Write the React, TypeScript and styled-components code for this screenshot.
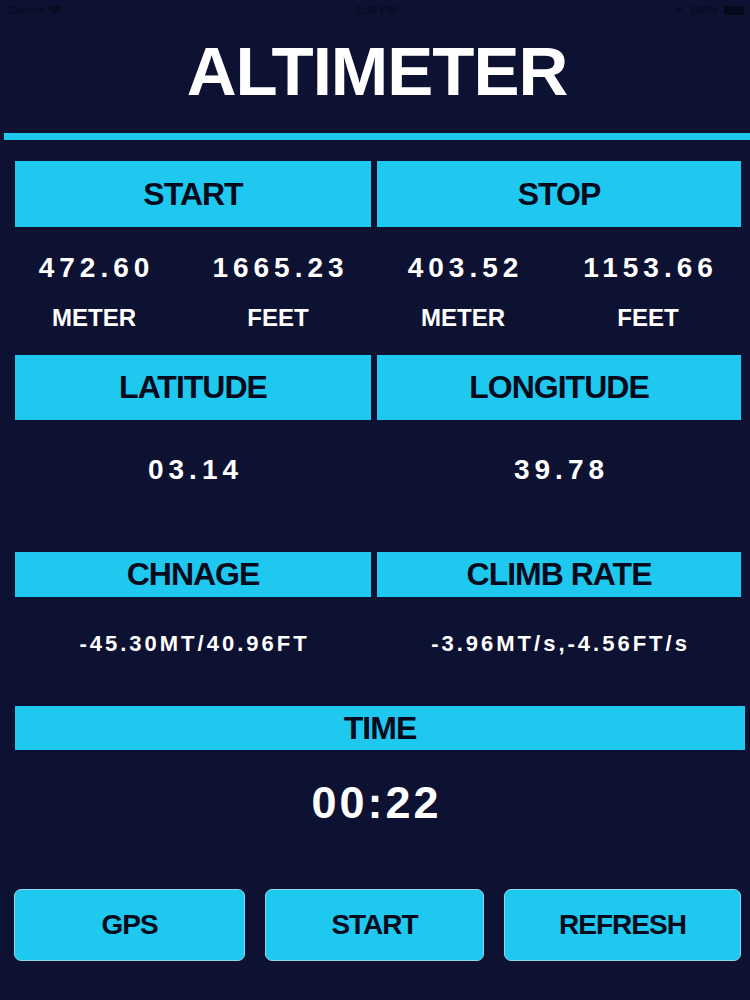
import React from 'react'
import styled, {createGlobalStyle} from 'styled-components'

const bg = '#0d1232'
const cyan = '#1fc8ee'
const ink = '#050a1c'
const font = `"Liberation Sans", Arial, sans-serif`

const GlobalStyle = createGlobalStyle`
    html, body {
        margin: 0;
        padding: 0;
        background: ${bg};
    }
    * {
        box-sizing: border-box;
    }
`

const Page = styled.div`
    width: 750px;
    height: 1000px;
    display: flex;
    flex-direction: column;
    background: ${bg};
    font-family: ${font};
    color: #ffffff;
    overflow: hidden;
`

const StatusBar = styled.div`
    height: 20px;
    display: grid;
    grid-template-columns: 1fr auto 1fr;
    align-items: center;
    padding: 0 6px 0 8px;
    font-size: 11px;
    font-weight: bold;
    color: #080b22;
`

const StatusLeft = styled.div`
    display: flex;
    align-items: center;
    gap: 4px;
`

const StatusRight = styled.div`
    display: flex;
    align-items: center;
    justify-content: flex-end;
    gap: 6px;
`

const Battery = styled.div`
    width: 20px;
    height: 9px;
    border-radius: 2px;
    background: #060919;
`

const Title = styled.h1`
    margin: 18px 0 0;
    height: 68px;
    font-size: 69px;
    line-height: 68px;
    font-weight: bold;
    letter-spacing: -1px;
    text-align: center;
    padding-left: 4px;
`

const Divider = styled.div`
    margin: 27px 0 0 4px;
    height: 7px;
    background: ${cyan};
`

const PairRow = styled.div<{ top: number }>`
    display: grid;
    grid-template-columns: 356px 1fr;
    column-gap: 6px;
    padding: 0 9px 0 15px;
    margin-top: ${({top}) => top}px;
`

const Header = styled.div<{ h: number }>`
    height: ${({h}) => h}px;
    background: ${cyan};
    color: ${ink};
    display: flex;
    align-items: center;
    justify-content: center;
    font-size: 32px;
    font-weight: bold;
    letter-spacing: -1px;
`

const WideHeader = styled(Header)`
    margin: 51px 5px 0 15px;
`

const QuadRow = styled.div<{ top: number }>`
    display: grid;
    grid-template-columns: 188px 180px 190px 180px;
    margin-top: ${({top}) => top}px;
`

const Value = styled.div<{ size: number, spacing: number }>`
    text-align: center;
    font-weight: bold;
    font-size: ${({size}) => size}px;
    line-height: ${({size}) => size}px;
    letter-spacing: ${({spacing}) => spacing}px;
    padding-left: ${({spacing}) => spacing}px;
    white-space: nowrap;
`

const Unit = styled.div`
    text-align: center;
    font-size: 24px;
    line-height: 24px;
    font-weight: bold;
`

const TimeValue = styled(Value)`
    margin-top: 30px;
`

const ButtonRow = styled.div`
    display: grid;
    grid-template-columns: 231px 219px 237px;
    column-gap: 20px;
    padding-left: 14px;
    margin-top: 64px;
`

const Button = styled.button`
    height: 72px;
    background: ${cyan};
    border: 1.5px solid #8ed6ec;
    border-radius: 7px;
    color: ${ink};
    font-family: ${font};
    font-size: 28px;
    font-weight: bold;
    letter-spacing: -1px;
    cursor: pointer;
`

const Wifi = () => (
    <svg width="14" height="10" viewBox="0 0 14 10">
        <path d="M7 10 L0 3 A10 10 0 0 1 14 3 Z" fill="#080b22"/>
    </svg>
)

export default function App() {
    return (
        <Page>
            <GlobalStyle/>
            <StatusBar>
                <StatusLeft>
                    <span>Carrier</span>
                    <Wifi/>
                </StatusLeft>
                <span>2:38 PM</span>
                <StatusRight>
                    <span>➤</span>
                    <span>100%</span>
                    <Battery/>
                </StatusRight>
            </StatusBar>

            <Title>ALTIMETER</Title>
            <Divider/>

            <PairRow top={21}>
                <Header h={66}>START</Header>
                <Header h={66}>STOP</Header>
            </PairRow>
            <QuadRow top={27}>
                <Value size={28} spacing={5}>472.60</Value>
                <Value size={28} spacing={5}>1665.23</Value>
                <Value size={28} spacing={5}>403.52</Value>
                <Value size={28} spacing={5}>1153.66</Value>
            </QuadRow>
            <QuadRow top={24}>
                <Unit>METER</Unit>
                <Unit>FEET</Unit>
                <Unit>METER</Unit>
                <Unit>FEET</Unit>
            </QuadRow>

            <PairRow top={25}>
                <Header h={65}>LATITUDE</Header>
                <Header h={65}>LONGITUDE</Header>
            </PairRow>
            <PairRow top={36}>
                <Value size={28} spacing={5}>03.14</Value>
                <Value size={28} spacing={5}>39.78</Value>
            </PairRow>

            <PairRow top={68}>
                <Header h={45}>CHNAGE</Header>
                <Header h={45}>CLIMB RATE</Header>
            </PairRow>
            <PairRow top={36}>
                <Value size={22} spacing={3}>-45.30MT/40.96FT</Value>
                <Value size={22} spacing={3}>-3.96MT/s,-4.56FT/s</Value>
            </PairRow>

            <WideHeader h={44}>TIME</WideHeader>
            <TimeValue size={45} spacing={3}>00:22</TimeValue>

            <ButtonRow>
                <Button>GPS</Button>
                <Button>START</Button>
                <Button>REFRESH</Button>
            </ButtonRow>
        </Page>
    )
}
